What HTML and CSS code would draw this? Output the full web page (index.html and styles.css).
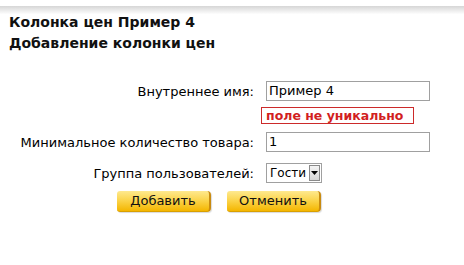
FILE: index.html
```html
<!DOCTYPE html>
<html lang="ru">
<head>
<meta charset="utf-8">
<title>Колонка цен</title>
<link rel="stylesheet" href="styles.css">
</head>
<body>
<div class="topbar"></div>
<div class="heading">
  <div>Колонка цен Пример 4</div>
  <div>Добавление колонки цен</div>
</div>
<form class="form">
  <div class="row row-name">
    <label class="label">Внутреннее имя:</label>
    <div class="input">Пример 4</div>
  </div>
  <div class="row row-error">
    <div class="label"></div>
    <div class="error">поле не уникально</div>
  </div>
  <div class="row row-qty">
    <label class="label">Минимальное количество товара:</label>
    <div class="input">1</div>
  </div>
  <div class="row row-group">
    <label class="label">Группа пользователей:</label>
    <div class="select">
      <span class="select-text">Гости</span>
      <span class="select-arrow"><svg width="7" height="4" viewBox="0 0 7 4"><path d="M0 0H7L3.5 4Z" fill="#000"/></svg></span>
    </div>
  </div>
  <div class="buttons">
    <div class="btn">Добавить</div>
    <div class="btn">Отменить</div>
  </div>
</form>
</body>
</html>
```
FILE: styles.css
```css
html, body {
  margin: 0;
  padding: 0;
  background: #fff;
}
body {
  font-family: "DejaVu Sans", Verdana, sans-serif;
  font-size: 13px;
  color: #000;
  width: 464px;
  height: 265px;
  overflow: hidden;
}
.topbar {
  margin-top: 6px;
  height: 8px;
  background: linear-gradient(#d6d6d6, #fdfdfd);
}
.heading {
  margin-top: -2px;
  padding-left: 9px;
  font-weight: bold;
  font-size: 14px;
  line-height: 21px;
  color: #111;
}
.form {
  margin: 27px 0 0 0;
}
.row {
  display: flex;
  align-items: center;
}
.label {
  width: 254px;
  text-align: right;
  margin-right: 12px;
  flex: none;
}
.input {
  box-sizing: border-box;
  width: 164px;
  height: 20px;
  border: 1px solid #a0a0a0;
  padding-left: 2px;
  line-height: 18px;
  background: #fff;
}
.row-name { height: 20px; }
.row-error { margin-top: 6px; height: 17px; }
.error {
  box-sizing: border-box;
  margin-left: -5px;
  width: 153px;
  height: 17px;
  border: 1px solid #cc2a2a;
  color: #d21f1f;
  font-weight: bold;
  font-size: 12.5px;
  line-height: 15px;
  padding-left: 4px;
  white-space: nowrap;
}
.row-qty { margin-top: 8px; height: 20px; }
.row-group { margin-top: 11px; height: 20px; }
.select {
  box-sizing: border-box;
  height: 20px;
  border: 1px solid #a0a0a0;
  display: flex;
  align-items: center;
  gap: 3px;
  padding: 0 1px 0 3px;
  background: #fff;
}
.select-text {
  font-size: 12px;
  line-height: 18px;
}
.select-arrow {
  box-sizing: border-box;
  width: 11px;
  height: 16px;
  border: 1px solid #8a8a8a;
  background: linear-gradient(#f4f4f4, #d4d4d4);
  display: flex;
  align-items: center;
  justify-content: center;
}
.select-arrow svg { display: block; }
.buttons {
  display: flex;
  gap: 16px;
  margin-top: 8px;
  padding-left: 117px;
}
.btn {
  box-sizing: border-box;
  width: 94px;
  height: 21px;
  border-radius: 3px 4px 4px 3px;
  background: linear-gradient(#fee98f 0%, #fbd54e 45%, #f4b600 100%);
  border-right: 2px solid #c98b10;
  border-bottom: 1px solid #d9a000;
  box-shadow: 1px 1px 1px rgba(0,0,0,0.15);
  text-align: center;
  line-height: 20px;
  color: #111;
}
```
